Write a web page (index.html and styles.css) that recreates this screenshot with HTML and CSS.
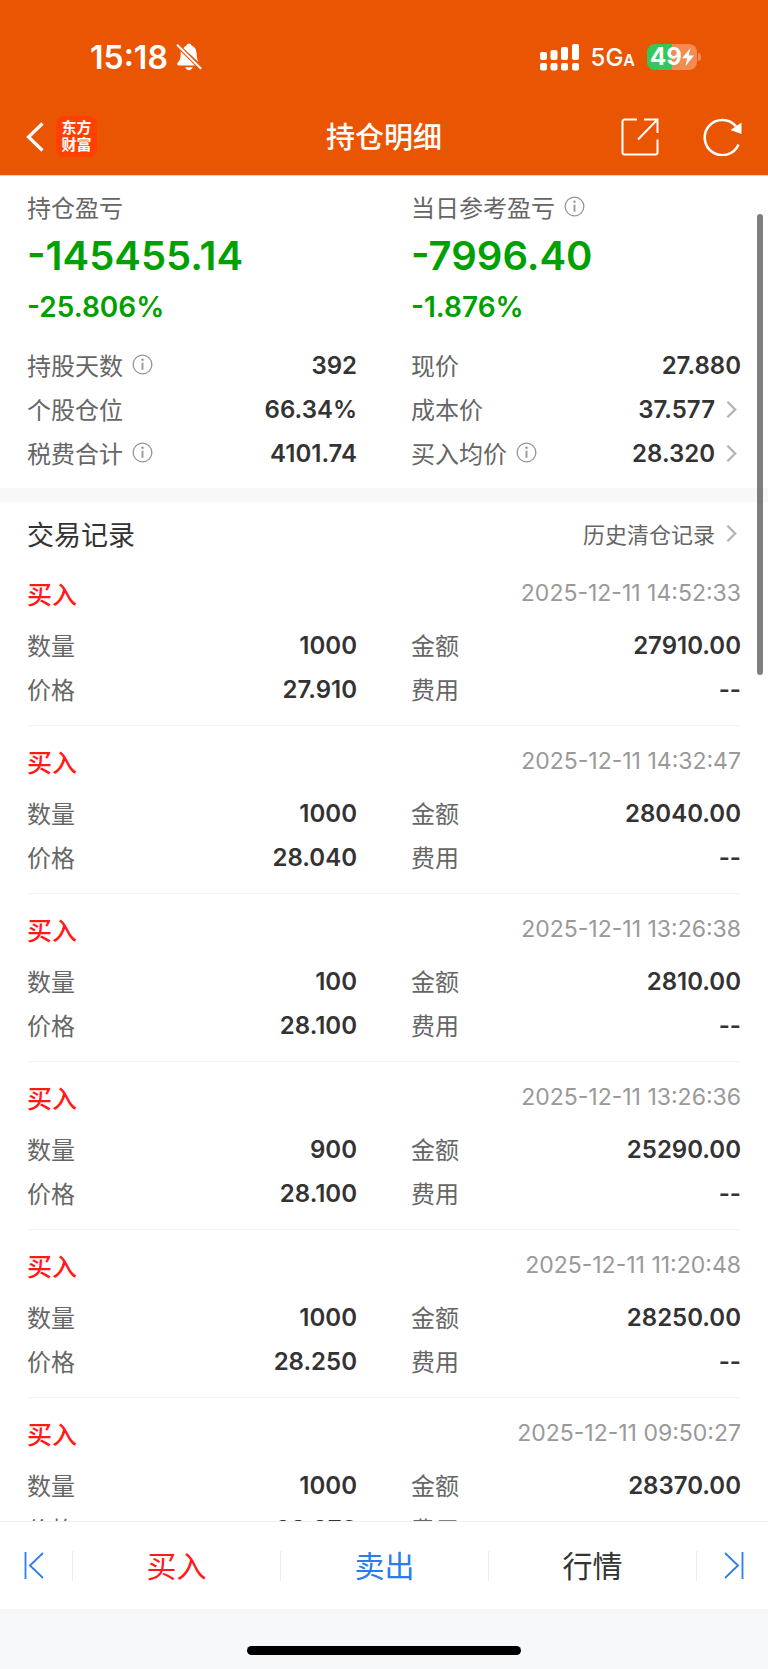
FILE: index.html
```
<!DOCTYPE html>
<html lang="zh-CN">
<head>
  <meta charset="UTF-8">
  <meta name="viewport" content="width=device-width, initial-scale=1.0">
  <title>持仓明细</title>
  <link rel="stylesheet" href="styles.css">
</head>
<body>

<!-- Shared icons -->
<svg class="icon-defs" aria-hidden="true">
  <symbol id="icon-info" viewBox="0 0 22 22">
    <circle cx="11" cy="11" r="9.8" fill="none" stroke="currentColor" stroke-width="1.4"/>
    <path d="M11 9v7.500" stroke="currentColor" stroke-width="2"/>
    <circle cx="11" cy="6" r="1.300" fill="currentColor"/>
  </symbol>
  <symbol id="icon-arrow" viewBox="0 0 12 20">
    <path d="M1.500 1.500 10 10l-8.500 8.500" fill="none" stroke="currentColor" stroke-width="2.500"/>
  </symbol>
</svg>

<header class="header">
  <div class="status-bar">
    <div class="status-left">
      <span class="time">15:18</span>
      <svg class="bell" viewBox="0 0 26 28" aria-hidden="true">
        <path d="M4.800 8.500 19 22.400H2.600C1 22.400.6 21 1.600 19.800 3.600 17.600 4.600 16 4.600 12z" fill="#fff"/>
        <path d="M7.500 5.300C8.300 3.800 9.500 3 10.500 2.600 10.700 1.200 11.700.5 13 .5s2.300.7 2.500 2.100c3 1.100 4.900 3.900 5.100 7.400.1 4 .6 6.800 2.200 9.200z" fill="#fff"/>
        <path d="M9.300 24.300h7.400c-.5 1.700-1.900 2.900-3.700 2.900s-3.200-1.200-3.700-2.900z" fill="#fff"/>
        <path d="M1.600 2.300 24.600 25.300" stroke="#fff" stroke-width="2" stroke-linecap="round"/>
      </svg>
    </div>
    <div class="status-right">
      <svg class="signal" viewBox="0 0 39 27" fill="#fff" aria-hidden="true">
        <rect x="0" y="8" width="7" height="8" rx="2"/>
        <rect x="10.500" y="6" width="7" height="10" rx="2"/>
        <rect x="21" y="3" width="7" height="13" rx="2"/>
        <rect x="32" y="0" width="7" height="16" rx="2"/>
        <rect x="0" y="19" width="7" height="7.500" rx="2"/>
        <rect x="10.500" y="19" width="7" height="7.500" rx="2"/>
        <rect x="21" y="19" width="7" height="7.500" rx="2"/>
        <rect x="32" y="19" width="7" height="7.500" rx="2"/>
      </svg>
      <span class="network">5G<small>A</small></span>
      <div class="battery">
        <span>49</span>
        <svg class="bolt" viewBox="0 0 12 18" aria-hidden="true">
          <path d="M8.500 0 0 10.200h5.200L3.500 18 12 7.500H6.800z" fill="#fff"/>
        </svg>
      </div>
    </div>
  </div>

  <nav class="nav">
    <div class="nav-side">
      <button class="back" aria-label="返回">
        <svg width="18" height="30" viewBox="0 0 18 30"><path d="M16.500 1.500 2.500 15l14 13.500" fill="none" stroke="#fff" stroke-width="3.200"/></svg>
      </button>
      <div class="logo">东方<br>财富</div>
    </div>
    <h1 class="title">持仓明细</h1>
    <div class="nav-side nav-actions">
      <button aria-label="分享">
        <svg width="38" height="38" viewBox="0 0 38 38" fill="none" stroke="#fff" stroke-width="2">
          <path d="M16 1.500H3.500a2 2 0 0 0-2 2v31a2 2 0 0 0 2 2h31a2 2 0 0 0 2-2V21.500M23 1.500h13.500V15M36 2 17 21.500"/>
        </svg>
      </button>
      <button aria-label="刷新">
        <svg width="39" height="38" viewBox="0 0 39 38">
          <path d="M35.500 26.500A17.600 17.600 0 1 1 33 8.500" fill="none" stroke="#fff" stroke-width="2.500"/>
          <path d="M38.500 4.500V16L27.500 12z" fill="#fff"/>
        </svg>
      </button>
    </div>
  </nav>
</header>

<main class="content">

  <!-- Position summary -->
  <section class="summary">
    <div class="profit">
      <h2 class="profit-label">持仓盈亏</h2>
      <p class="profit-value">-145455.14</p>
      <p class="profit-rate">-25.806%</p>
    </div>
    <div class="profit">
      <h2 class="profit-label">当日参考盈亏 <button class="info" aria-label="当日参考盈亏说明"><svg><use href="#icon-info"/></svg></button></h2>
      <p class="profit-value">-7996.40</p>
      <p class="profit-rate">-1.876%</p>
    </div>
    <dl class="fields">
      <div class="field"><dt>持股天数 <button class="info" aria-label="持股天数说明"><svg><use href="#icon-info"/></svg></button></dt><dd>392</dd></div>
      <div class="field"><dt>现价</dt><dd>27.880</dd></div>
      <div class="field"><dt>个股仓位</dt><dd>66.34%</dd></div>
      <div class="field"><dt>成本价</dt><dd><button class="more">37.577 <svg class="arrow"><use href="#icon-arrow"/></svg></button></dd></div>
      <div class="field"><dt>税费合计 <button class="info" aria-label="税费合计说明"><svg><use href="#icon-info"/></svg></button></dt><dd>4101.74</dd></div>
      <div class="field"><dt>买入均价 <button class="info" aria-label="买入均价说明"><svg><use href="#icon-info"/></svg></button></dt><dd><button class="more">28.320 <svg class="arrow"><use href="#icon-arrow"/></svg></button></dd></div>
    </dl>
  </section>

  <!-- Trade records -->
  <section class="records">
    <div class="records-head">
      <h2>交易记录</h2>
      <a class="more" href="#history">历史清仓记录 <svg class="arrow"><use href="#icon-arrow"/></svg></a>
    </div>
    <ul class="trade-list">
      <li class="trade">
        <div class="trade-head"><h3>买入</h3><time>2025-12-11 14:52:33</time></div>
        <dl class="fields">
          <div class="field"><dt>数量</dt><dd>1000</dd></div>
          <div class="field"><dt>金额</dt><dd>27910.00</dd></div>
          <div class="field"><dt>价格</dt><dd>27.910</dd></div>
          <div class="field"><dt>费用</dt><dd>--</dd></div>
        </dl>
      </li>
      <li class="trade">
        <div class="trade-head"><h3>买入</h3><time>2025-12-11 14:32:47</time></div>
        <dl class="fields">
          <div class="field"><dt>数量</dt><dd>1000</dd></div>
          <div class="field"><dt>金额</dt><dd>28040.00</dd></div>
          <div class="field"><dt>价格</dt><dd>28.040</dd></div>
          <div class="field"><dt>费用</dt><dd>--</dd></div>
        </dl>
      </li>
      <li class="trade">
        <div class="trade-head"><h3>买入</h3><time>2025-12-11 13:26:38</time></div>
        <dl class="fields">
          <div class="field"><dt>数量</dt><dd>100</dd></div>
          <div class="field"><dt>金额</dt><dd>2810.00</dd></div>
          <div class="field"><dt>价格</dt><dd>28.100</dd></div>
          <div class="field"><dt>费用</dt><dd>--</dd></div>
        </dl>
      </li>
      <li class="trade">
        <div class="trade-head"><h3>买入</h3><time>2025-12-11 13:26:36</time></div>
        <dl class="fields">
          <div class="field"><dt>数量</dt><dd>900</dd></div>
          <div class="field"><dt>金额</dt><dd>25290.00</dd></div>
          <div class="field"><dt>价格</dt><dd>28.100</dd></div>
          <div class="field"><dt>费用</dt><dd>--</dd></div>
        </dl>
      </li>
      <li class="trade">
        <div class="trade-head"><h3>买入</h3><time>2025-12-11 11:20:48</time></div>
        <dl class="fields">
          <div class="field"><dt>数量</dt><dd>1000</dd></div>
          <div class="field"><dt>金额</dt><dd>28250.00</dd></div>
          <div class="field"><dt>价格</dt><dd>28.250</dd></div>
          <div class="field"><dt>费用</dt><dd>--</dd></div>
        </dl>
      </li>
      <li class="trade">
        <div class="trade-head"><h3>买入</h3><time>2025-12-11 09:50:27</time></div>
        <dl class="fields">
          <div class="field"><dt>数量</dt><dd>1000</dd></div>
          <div class="field"><dt>金额</dt><dd>28370.00</dd></div>
          <div class="field"><dt>价格</dt><dd>28.370</dd></div>
          <div class="field"><dt>费用</dt><dd>--</dd></div>
        </dl>
      </li>
    </ul>
  </section>

  <div class="scroll-thumb"></div>
</main>

<footer class="footer">
  <div class="toolbar">
    <button class="step" aria-label="上一个">
      <svg width="20" height="27" viewBox="0 0 20 27" fill="none" stroke="currentColor" stroke-width="1.800"><path d="M1.500 0v27M19 1 6 13.500 19 26"/></svg>
    </button>
    <button class="buy">买入</button>
    <button class="sell">卖出</button>
    <button class="quote">行情</button>
    <button class="step" aria-label="下一个">
      <svg width="20" height="27" viewBox="0 0 20 27" fill="none" stroke="currentColor" stroke-width="1.800"><path d="M18.500 0v27M1 1l13 12.500L1 26"/></svg>
    </button>
  </div>
  <div class="home-bar"><span></span></div>
</footer>

</body>
</html>
```
FILE: styles.css
```
* {
  box-sizing: border-box;
  margin: 0;
  padding: 0;
}

body {
  display: flex;
  flex-direction: column;
  height: 100vh;
  background-color: #fff;
  color: #333;
  font-family: Inter, "Noto Sans CJK SC", sans-serif;
  font-size: 24px;
}

button {
  border: none;
  background: none;
  color: inherit;
  font: inherit;
  cursor: pointer;
}

svg {
  display: block;
  flex-shrink: 0;
}

.icon-defs {
  position: absolute;
  width: 0;
  height: 0;
}

/* Header */
.header {
  flex-shrink: 0;
  background-color: #ea5504;
  border-bottom: 1px solid #fbccb4;
  color: #fff;
}

.status-bar {
  display: flex;
  justify-content: space-between;
  align-items: center;
  height: 98px;
  padding: 16px 71px 0 90px;
}

.status-left,
.status-right {
  display: flex;
  align-items: center;
}

.status-left {
  gap: 8px;
}

.status-right {
  gap: 12px;
}

.time {
  font-size: 32px;
  font-weight: 600;
}

.bell {
  width: 26px;
  height: 28px;
}

.signal {
  width: 39px;
  height: 27px;
}

.network {
  font-size: 24px;
  font-weight: 500;
}

.network small {
  font-size: 16px;
  font-weight: 600;
}

.battery {
  position: relative;
  display: flex;
  align-items: center;
  justify-content: center;
  width: 50px;
  height: 26px;
  border-radius: 8px;
  background: linear-gradient(to right, #34c759 50%, #f28b54 50%);
  font-size: 24px;
  font-weight: 700;
  line-height: 26px;
}

.battery::after {
  content: "";
  position: absolute;
  left: 51px;
  top: 9px;
  width: 3px;
  height: 8px;
  border-radius: 0 3px 3px 0;
  background-color: #f28b54;
}

.bolt {
  width: 12px;
  height: 18px;
}

.nav {
  display: flex;
  align-items: center;
  height: 77px;
  padding: 0 26px;
}

.nav-side {
  display: flex;
  flex: 1;
  align-items: center;
  gap: 12px;
}

.nav-actions {
  justify-content: flex-end;
  gap: 44px;
}

.logo {
  width: 41px;
  height: 41px;
  padding-top: 3px;
  border-radius: 8px;
  background-color: #ff4000;
  font-size: 15px;
  font-weight: 700;
  line-height: 17px;
  text-align: center;
}

.title {
  padding-bottom: 3px;
  font-family: "Noto Sans CJK SC", sans-serif;
  font-size: 29px;
  font-weight: 500;
}

/* Scrolling content */
.content {
  position: relative;
  flex: 1;
  min-height: 0;
  overflow: hidden;
}

.scroll-thumb {
  position: absolute;
  top: 38px;
  right: 5px;
  width: 6px;
  height: 461px;
  border-radius: 3px;
  background-color: rgba(0, 0, 0, 0.5);
}

.summary {
  display: grid;
  grid-template-columns: 1fr 1fr;
  column-gap: 54px;
  padding: 10px 27px 13px;
  border-bottom: 14px solid #f7f8fa;
}

.summary .fields {
  grid-column: 1 / -1;
  margin-top: 11px;
}

.profit {
  color: #00a000;
}

.profit-label {
  display: flex;
  align-items: center;
  gap: 9px;
  height: 44px;
  padding-bottom: 3px;
  color: #666;
  font-family: "Noto Sans CJK SC", sans-serif;
  font-size: 24px;
  font-weight: 400;
}

.profit-value {
  font-size: 40px;
  font-weight: 600;
  line-height: 52px;
}

.profit-rate {
  font-size: 28px;
  font-weight: 600;
  line-height: 50px;
}

.fields {
  display: grid;
  grid-template-columns: 1fr 1fr;
  column-gap: 54px;
}

.field {
  display: flex;
  justify-content: space-between;
  align-items: center;
  height: 44px;
}

.field dt {
  display: flex;
  align-items: center;
  gap: 9px;
  padding-bottom: 2px;
  color: #666;
  font-family: "Noto Sans CJK SC", sans-serif;
}

.field dd {
  font-weight: 600;
}

.info {
  color: #999;
}

.info svg {
  width: 21px;
  height: 21px;
}

.more {
  display: flex;
  align-items: center;
  gap: 11px;
  padding-right: 4px;
}

.arrow {
  width: 11px;
  height: 19px;
  color: #b3b3b3;
}

/* Trade records */
.records {
  padding: 0 27px;
}

.records-head {
  display: flex;
  justify-content: space-between;
  align-items: center;
  height: 56px;
  padding-top: 6px;
  font-family: "Noto Sans CJK SC", sans-serif;
}

.records-head h2 {
  font-size: 27px;
  font-weight: 400;
}

.records-head a {
  color: #666;
  font-size: 22px;
  text-decoration: none;
}

.trade-list {
  list-style: none;
}

.trade {
  padding: 17px 0 14px;
  border-bottom: 1px solid #f2f2f2;
}

.trade-head {
  display: flex;
  justify-content: space-between;
  align-items: center;
  height: 36px;
  margin-bottom: 12px;
}

.trade-head h3 {
  color: #ff1a1a;
  font-size: 25px;
  font-weight: 500;
}

.trade-head time {
  color: #999;
  font-size: 23px;
}

/* Bottom toolbar */
.footer {
  flex-shrink: 0;
}

.toolbar {
  display: flex;
  align-items: center;
  height: 88px;
  border-top: 1px solid #f0f0f0;
  background-color: #fff;
}

.toolbar button {
  display: flex;
  flex: 1;
  align-items: center;
  justify-content: center;
  height: 30px;
  padding-bottom: 3px;
  font-family: "Noto Sans CJK SC", sans-serif;
  font-size: 30px;
}

.toolbar button + button {
  border-left: 1px solid #ebebeb;
}

.toolbar .step {
  flex: 0 0 72px;
  padding: 0 5px 0 0;
  color: #2b7de9;
}

.toolbar .step:last-child {
  padding: 0 0 0 3px;
}

.toolbar .buy {
  color: #ff1a1a;
}

.toolbar .sell {
  color: #2b7de9;
}

.home-bar {
  display: flex;
  justify-content: center;
  height: 60px;
  padding-top: 37px;
  background-color: #f7f8fa;
}

.home-bar span {
  width: 274px;
  height: 9px;
  border-radius: 5px;
  background-color: #000;
}
```
